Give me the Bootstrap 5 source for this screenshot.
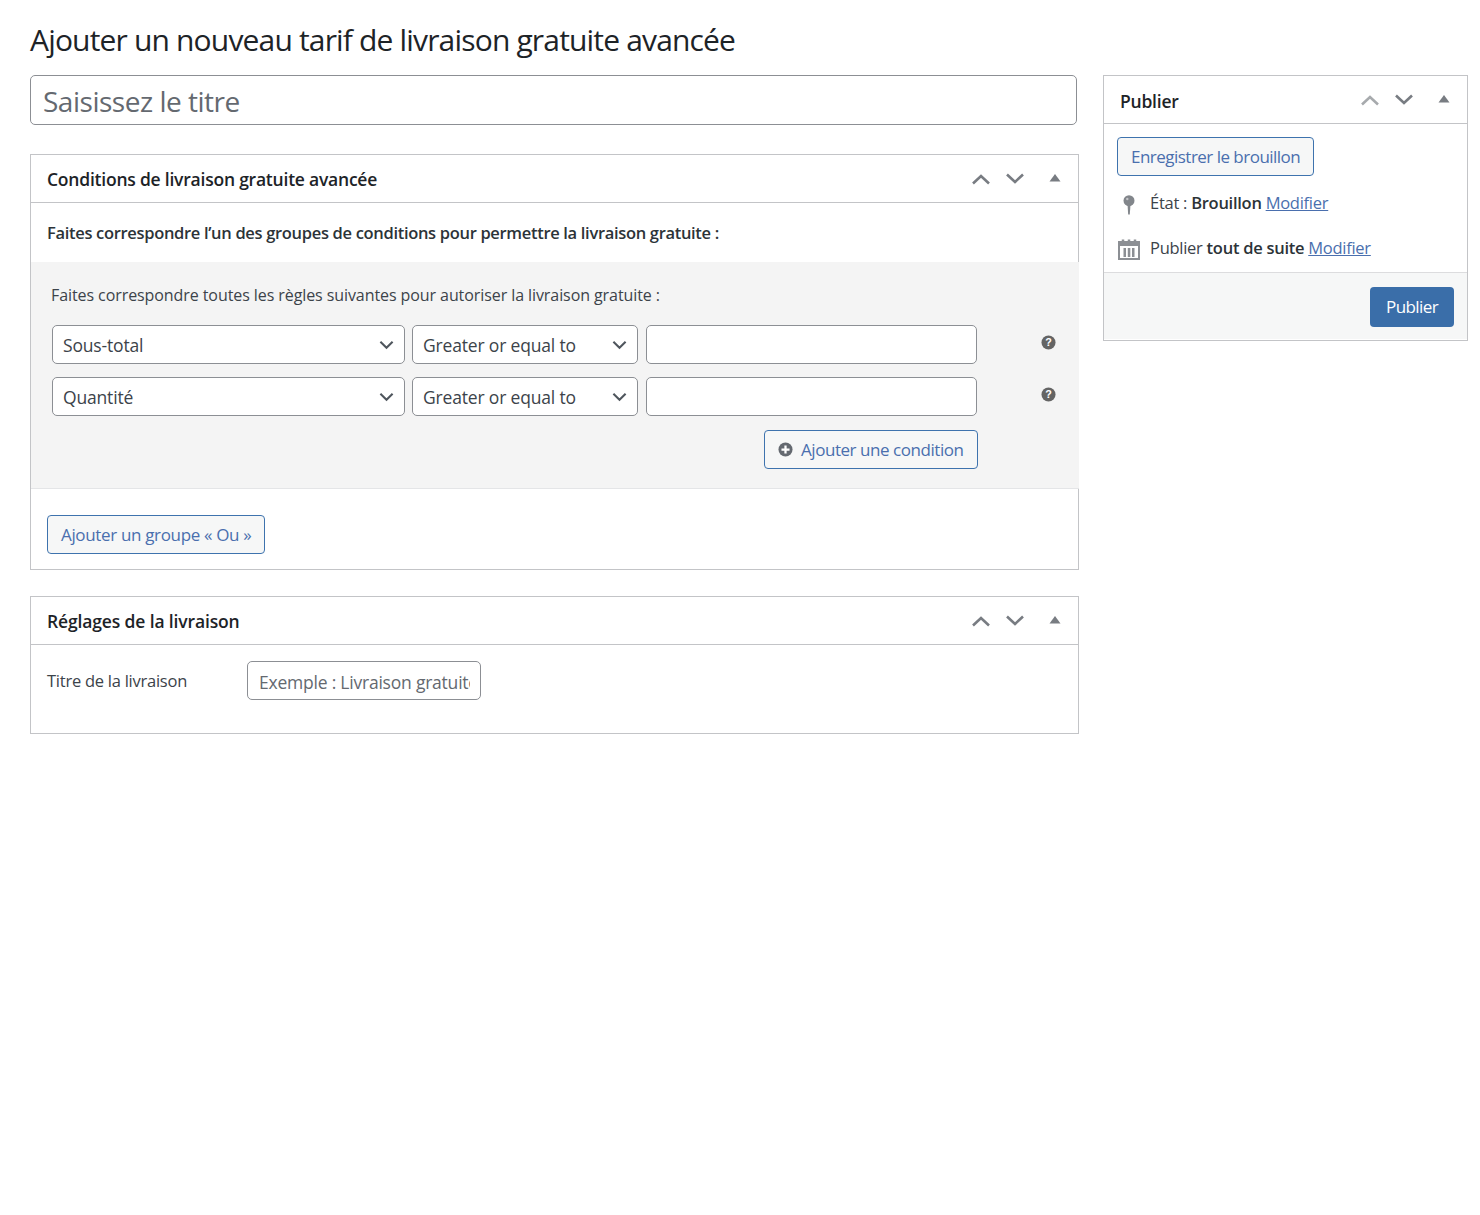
<!DOCTYPE html>
<html lang="fr"><head><meta charset="utf-8"><title>Ajouter un nouveau tarif</title>
<link href="https://cdn.jsdelivr.net/npm/bootstrap@5.3.0/dist/css/bootstrap.min.css" rel="stylesheet">
<style>
body{font-family:"Open Sans","Noto Sans",sans-serif;color:#3c434a;background:#fff;font-size:16px;letter-spacing:-.3px}
.wp-page{padding:0 12px 0 30px}
.page-h{font-size:30px;font-weight:400;color:#1d2327;line-height:40px;margin:0;padding:20px 0 15px;letter-spacing:-.83px}
.main-col{width:1049px;flex:none}
.side-col{width:365px;flex:none}
.title-in{display:block;width:1047px;height:50px;border:1px solid #8c8f94;border-radius:5px;font-size:28px;padding:2px 12px 0 12px;color:#3c434a;letter-spacing:-.48px}
.title-in::placeholder{color:#646970;opacity:1}
.box{border:1px solid #c3c4c7;background:#fff}
.box-head{height:48px;border-bottom:1px solid #c3c4c7;padding:0 12px 0 16px;color:#1d2327;font-weight:600;font-size:17.5px;letter-spacing:-.22px}
.head-txt{padding-top:1px}
.pub-box .head-txt{padding-top:4px}
.box-two .head-txt{letter-spacing:-.14px}
.box-one{margin-top:29px;height:416px}
.box-two{margin-top:26px;height:138px}
.arrows{gap:12px}
.ic-h{display:block}
.tri-ic{margin-left:6px}
.lead-row{height:59px;padding:2px 16px 0;font-weight:600;font-size:16.5px;color:#2c3338;letter-spacing:-.32px}
.group-zone{background:#f4f4f4;height:227px;margin-right:-1px;padding:22px 21px 0;border-bottom:1px solid #e4e5e7}
.group-lead{font-size:16px;line-height:22px;margin:0 0 19px -1px;letter-spacing:-.08px}
.rule-row{height:39px;margin-bottom:13px}
.sel{height:39px;border:1px solid #8c8f94;border-radius:5px;font-size:17.5px;color:#3c434a;padding:1px 30px 0 10px;letter-spacing:-.17px;background-image:url("data:image/svg+xml,%3csvg xmlns='http://www.w3.org/2000/svg' viewBox='0 0 16 10'%3e%3cpath fill='none' stroke='%2350575e' stroke-width='2.200' d='M1.500 1.500 8 8l6.500-6.500'/%3e%3c/svg%3e");background-size:15px 10px;background-position:right 10px center}
.sel-a{width:353px}
.sel-b{width:226px;margin-left:7px}
.val-in{width:331px;height:39px;border:1px solid #8c8f94;border-radius:5px;margin-left:8px;background:#fff}
.help-ic{margin-left:64px;margin-top:-5px}
.wp-btn{height:39px;border:1px solid #3e73ae;border-radius:4px;background:#f6f7f7;color:#4a6fae;font-size:17px;padding:0 13px;white-space:nowrap;letter-spacing:-.34px}
.add-cond{margin-left:712px;margin-top:1px;gap:8px;letter-spacing:-.45px}
.draft-btn{letter-spacing:-.52px}
.or-zone{padding:26px 16px 0}
.ship-row{padding:16px 16px 0}
.ship-lab{width:200px;font-size:16.5px;letter-spacing:-.25px;padding-top:1px}
.ship-in{width:234px;height:39px;border:1px solid #8c8f94;border-radius:5px;padding:2px 10px 0 11px;font-size:17.5px;letter-spacing:-.22px}
.ship-in::placeholder{color:#646970;opacity:1}
.pub-box{height:266px;margin-top:0}
.pub-body{padding:13px 13px 0;height:148px}
.meta-line{height:45px;font-size:16.5px;gap:10px;letter-spacing:-.27px}
.meta-line a{color:#4a6fae}
.meta-line b{font-weight:600;color:#2c3338}
.meta-ic{width:23px;flex:none;display:flex;justify-content:center}
.pin-wrap{padding-top:2px}
.first-meta{margin-top:5px}
.pub-foot{background:#f6f7f7;border-top:1px solid #dcdcde;height:67px;padding:14px 13px 0}
.pub-btn{height:40px;background:#3a6ea9;border:0;border-radius:4px;color:#fff;font-size:17px;padding:0 16px;letter-spacing:-.6px}
</style></head><body>
<div class="wp-page">
<h1 class="page-h">Ajouter un nouveau tarif de livraison gratuite avancée</h1>
<div class="d-flex gap-4 align-items-start">
 <div class="main-col">
  <input class="title-in" type="text" placeholder="Saisissez le titre">
  <section class="box box-one">
   <div class="box-head d-flex align-items-center justify-content-between">
    <span class="head-txt">Conditions de livraison gratuite avancée</span>
    <span class="d-flex align-items-center arrows">
     <svg class="ic-h" width="22" height="14" viewBox="0 0 22 14"><path d="M3 11.500 11 4l8 7.500" fill="none" stroke="#787c82" stroke-width="2.600"/></svg>
     <svg class="ic-h" width="22" height="14" viewBox="0 0 22 14"><path d="M3 2.500 11 10l8-7.500" fill="none" stroke="#787c82" stroke-width="2.600"/></svg>
     <svg class="ic-h tri-ic" width="22" height="14" viewBox="0 0 22 14"><path d="M11 2l5.500 7.500h-11z" fill="#787c82"/></svg>
    </span>
   </div>
   <div class="lead-row d-flex align-items-center">Faites correspondre l’un des groupes de conditions pour permettre la livraison gratuite :</div>
   <div class="group-zone">
    <p class="group-lead">Faites correspondre toutes les règles suivantes pour autoriser la livraison gratuite :</p>
    <div class="rule-row d-flex align-items-center">
     <select class="form-select sel sel-a"><option>Sous-total</option></select>
     <select class="form-select sel sel-b"><option>Greater or equal to</option></select>
     <input class="val-in" type="text">
     <svg class="help-ic" width="15" height="15" viewBox="0 0 16 16"><circle cx="8" cy="8" r="7.500" fill="#646464"/><text x="8" y="12" font-size="11.500" font-weight="700" text-anchor="middle" fill="#fff" font-family="Liberation Sans">?</text></svg>
    </div>
    <div class="rule-row d-flex align-items-center">
     <select class="form-select sel sel-a"><option>Quantité</option></select>
     <select class="form-select sel sel-b"><option>Greater or equal to</option></select>
     <input class="val-in" type="text">
     <svg class="help-ic" width="15" height="15" viewBox="0 0 16 16"><circle cx="8" cy="8" r="7.500" fill="#646464"/><text x="8" y="12" font-size="11.500" font-weight="700" text-anchor="middle" fill="#fff" font-family="Liberation Sans">?</text></svg>
    </div>
    <button class="wp-btn add-cond d-inline-flex align-items-center" type="button">
     <svg width="15" height="15" viewBox="0 0 16 16"><circle cx="8" cy="8" r="7.500" fill="#646970"/><path d="M8 3.700v8.600M3.700 8h8.600" stroke="#fff" stroke-width="2.400"/></svg>
     Ajouter une condition</button>
   </div>
   <div class="or-zone"><button class="wp-btn" type="button">Ajouter un groupe « Ou »</button></div>
  </section>
  <section class="box box-two">
   <div class="box-head d-flex align-items-center justify-content-between">
    <span class="head-txt">Réglages de la livraison</span>
    <span class="d-flex align-items-center arrows">
     <svg class="ic-h" width="22" height="14" viewBox="0 0 22 14"><path d="M3 11.500 11 4l8 7.500" fill="none" stroke="#787c82" stroke-width="2.600"/></svg>
     <svg class="ic-h" width="22" height="14" viewBox="0 0 22 14"><path d="M3 2.500 11 10l8-7.500" fill="none" stroke="#787c82" stroke-width="2.600"/></svg>
     <svg class="ic-h tri-ic" width="22" height="14" viewBox="0 0 22 14"><path d="M11 2l5.500 7.500h-11z" fill="#787c82"/></svg>
    </span>
   </div>
   <div class="ship-row d-flex align-items-center">
    <label class="ship-lab">Titre de la livraison</label>
    <input class="ship-in" type="text" placeholder="Exemple : Livraison gratuite">
   </div>
  </section>
 </div>
 <aside class="side-col">
  <section class="box pub-box">
   <div class="box-head d-flex align-items-center justify-content-between">
    <span class="head-txt">Publier</span>
    <span class="d-flex align-items-center arrows">
     <svg class="ic-h" width="22" height="14" viewBox="0 0 22 14"><path d="M3 11.500 11 4l8 7.500" fill="none" stroke="#a7aaad" stroke-width="2.600"/></svg>
     <svg class="ic-h" width="22" height="14" viewBox="0 0 22 14"><path d="M3 2.500 11 10l8-7.500" fill="none" stroke="#787c82" stroke-width="2.600"/></svg>
     <svg class="ic-h tri-ic" width="22" height="14" viewBox="0 0 22 14"><path d="M11 2l5.500 7.500h-11z" fill="#787c82"/></svg>
    </span>
   </div>
   <div class="pub-body">
    <button class="wp-btn draft-btn" type="button">Enregistrer le brouillon</button>
    <div class="meta-line first-meta d-flex align-items-center">
     <span class="meta-ic pin-wrap"><svg width="12" height="20" viewBox="0 0 12 20"><circle cx="6" cy="5.700" r="5.500" fill="#82868b"/><path d="M4.500 9h3l-.7 10.500H5.200z" fill="#82868b"/><circle cx="4.300" cy="4" r="1.200" fill="#c3c4c7"/></svg></span>
     <span>État : <b>Brouillon</b> <a href="#">Modifier</a></span>
    </div>
    <div class="meta-line d-flex align-items-center">
     <span class="meta-ic"><svg width="22" height="22" viewBox="0 0 22 22"><path d="M1 4h20v17H1z" fill="none" stroke="#8c8f94" stroke-width="2"/><path d="M1 4h20v4H1z" fill="#8c8f94"/><path d="M5 1.500v4M11 1.500v4M17 1.500v4" stroke="#8c8f94" stroke-width="2.500"/><path d="M5.500 10h2.500v9H5.500zM9.800 10h2.500v9H9.800zM14 10h2.500v9H14z" fill="#8c8f94"/></svg></span>
     <span>Publier <b>tout de suite</b> <a href="#">Modifier</a></span>
    </div>
   </div>
   <div class="pub-foot d-flex justify-content-end align-items-start"><button class="pub-btn" type="button">Publier</button></div>
  </section>
 </aside>
</div>
</div>
<script src="https://cdn.jsdelivr.net/npm/bootstrap@5.3.0/dist/js/bootstrap.bundle.min.js"></script>
</body></html>
